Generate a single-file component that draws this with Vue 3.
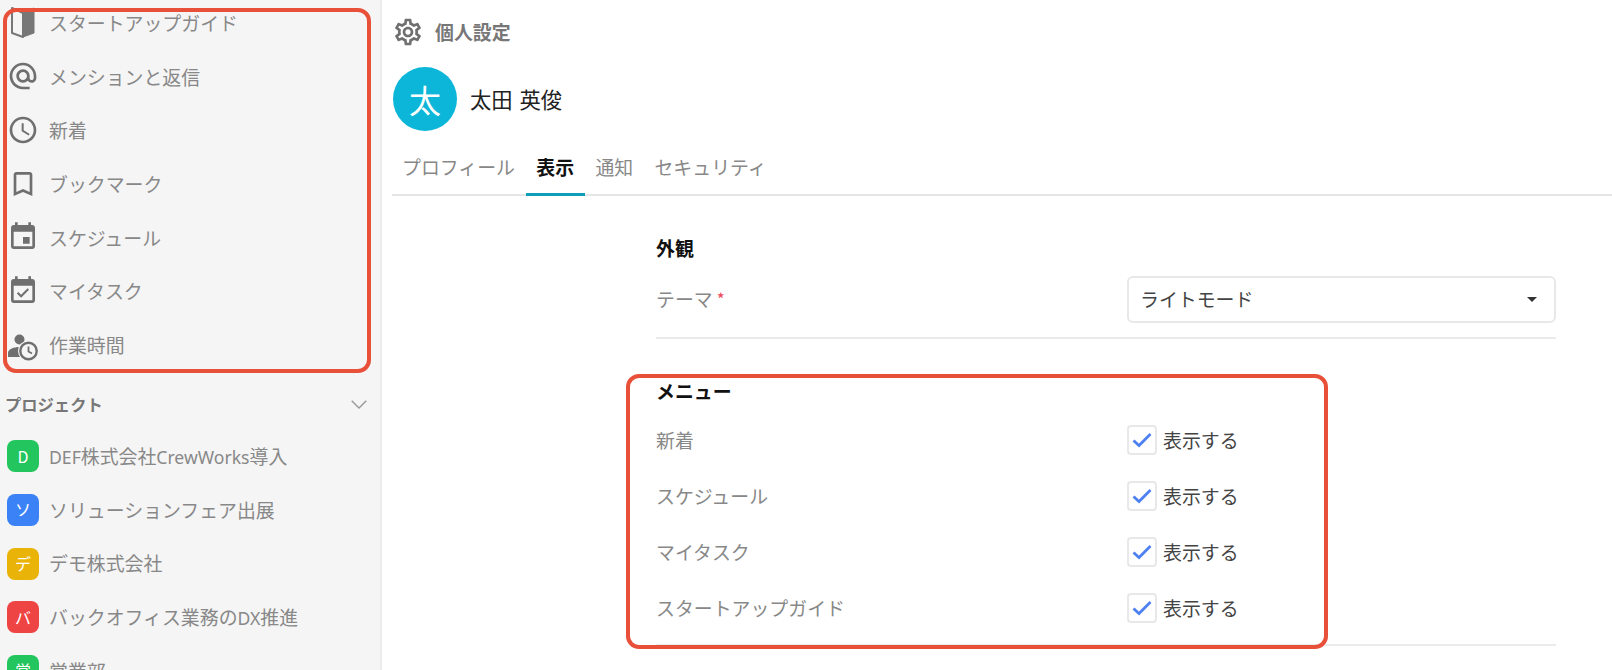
<script setup>
const navItems = [
  { label: 'スタートアップガイド', icon: 'book' },
  { label: 'メンションと返信', icon: 'M12 2C6.48 2 2 6.48 2 12s4.48 10 10 10h5v-2h-5c-4.34 0-8-3.66-8-8s3.66-8 8-8 8 3.66 8 8v1.43c0 .79-.71 1.57-1.5 1.57s-1.5-.78-1.5-1.57V12c0-2.76-2.24-5-5-5s-5 2.24-5 5 2.24 5 5 5c1.38 0 2.64-.56 3.54-1.47.65.89 1.77 1.47 2.96 1.47 1.97 0 3.5-1.6 3.5-3.57V12c0-5.52-4.48-10-10-10zm0 13c-1.66 0-3-1.34-3-3s1.34-3 3-3 3 1.34 3 3-1.34 3-3 3z' },
  { label: '新着', icon: 'M11.99 2C6.47 2 2 6.48 2 12s4.47 10 9.99 10C17.52 22 22 17.52 22 12S17.52 2 11.99 2zM12 20c-4.42 0-8-3.58-8-8s3.58-8 8-8 8 3.58 8 8-3.58 8-8 8zm.5-13H11v6l5.25 3.15.75-1.23-4.5-2.67z' },
  { label: 'ブックマーク', icon: 'M17 3H7c-1.1 0-1.99.9-1.99 2L5 21l7-3 7 3V5c0-1.1-.9-2-2-2zm0 15l-5-2.18L7 18V5h10v13z' },
  { label: 'スケジュール', icon: 'M17 12h-5v5h5v-5zM16 1v2H8V1H6v2H5c-1.11 0-1.99.9-1.99 2L3 19c0 1.1.89 2 2 2h14c1.1 0 2-.9 2-2V5c0-1.1-.9-2-2-2h-1V1h-2zm3 18H5V8h14v11z' },
  { label: 'マイタスク', icon: 'M16.53 11.06L15.47 10l-4.88 4.88-2.12-2.12-1.06 1.06L10.59 17l5.94-5.94zM19 3h-1V1h-2v2H8V1H6v2H5c-1.11 0-1.99.9-1.99 2L3 19c0 1.1.89 2 2 2h14c1.1 0 2-.9 2-2V5c0-1.1-.9-2-2-2zm0 16H5V8h14v11z' },
  { label: '作業時間', icon: 'person' },
]
const projects = [
  { badge: 'D', parts: [['DEF', true], ['株式会社', false], ['CrewWorks', true], ['導入', false]], color: '#22c55e' },
  { badge: 'ソ', parts: [['ソリューションフェア出展', false]], color: '#3b82f6' },
  { badge: 'デ', parts: [['デモ株式会社', false]], color: '#eab308' },
  { badge: 'バ', parts: [['バックオフィス業務の', false], ['DX', true], ['推進', false]], color: '#ef4444' },
  { badge: '営', parts: [['営業部', false]], color: '#22c55e' },
]
const tabs = ['プロフィール', '表示', '通知', 'セキュリティ']
const menuRows = ['新着', 'スケジュール', 'マイタスク', 'スタートアップガイド']
const gear = 'M19.43 12.98c.04-.32.07-.64.07-.98 0-.34-.03-.66-.07-.98l2.11-1.65c.19-.15.24-.42.12-.64l-2-3.46c-.09-.16-.26-.25-.44-.25-.06 0-.12.01-.17.03l-2.49 1c-.52-.4-1.08-.73-1.69-.98l-.38-2.65C14.46 2.18 14.25 2 14 2h-4c-.25 0-.46.18-.49.42l-.38 2.65c-.61.25-1.17.59-1.69.98l-2.49-1c-.06-.02-.12-.03-.18-.03-.17 0-.34.09-.43.25l-2 3.46c-.13.22-.07.49.12.64l2.11 1.65c-.04.32-.07.65-.07.98 0 .33.03.66.07.98l-2.11 1.65c-.19.15-.24.42-.12.64l2 3.46c.09.16.26.25.44.25.06 0 .12-.01.17-.03l2.49-1c.52.4 1.08.73 1.69.98l.38 2.65c.03.24.24.42.49.42h4c.25 0 .46-.18.49-.42l.38-2.65c.61-.25 1.17-.59 1.69-.98l2.49 1c.06.02.12.03.18.03.17 0 .34-.09.43-.25l2-3.46c.12-.22.07-.49-.12-.64l-2.11-1.65zm-1.98-1.71c.04.31.05.52.05.73 0 .21-.02.43-.05.73l-.14 1.13.89.7 1.08.84-.7 1.21-1.27-.51-1.04-.42-.9.68c-.43.32-.84.56-1.25.73l-1.06.43-.16 1.13-.2 1.35h-1.4l-.19-1.35-.16-1.13-1.06-.43c-.43-.18-.83-.41-1.23-.71l-.91-.7-1.06.43-1.27.51-.7-1.21 1.08-.84.89-.7-.14-1.13c-.03-.31-.05-.54-.05-.74s.02-.43.05-.73l.14-1.13-.89-.7-1.08-.84.7-1.21 1.27.51 1.04.42.9-.68c.43-.32.84-.56 1.25-.73l1.06-.43.16-1.13.2-1.35h1.39l.19 1.35.16 1.13 1.06.43c.43.18.83.41 1.23.71l.91.7 1.06-.43 1.27-.51.7 1.21-1.07.85-.89.7.14 1.13zM12 8c-2.21 0-4 1.79-4 4s1.79 4 4 4 4-1.79 4-4-1.79-4-4-4zm0 6c-1.1 0-2-.9-2-2s.9-2 2-2 2 .9 2 2-.9 2-2 2z'
</script>

<template>
  <div class="page">
    <aside class="sidebar">
      <nav class="nav">
        <div v-for="item in navItems" :key="item.label" class="nav-row">
          <svg v-if="item.icon === 'book'" class="nav-icon" viewBox="0 0 32 32">
            <path d="M5 1 16 6V30L5 26Z" fill="none" stroke="#777" stroke-width="2" stroke-linejoin="round" />
            <path d="M16 6 27 1V26L16 30Z" fill="#777" stroke="#777" stroke-width="1" stroke-linejoin="round" />
          </svg>
          <svg v-else-if="item.icon === 'person'" class="nav-icon person" viewBox="0 0 32 32">
            <circle cx="12.5" cy="10.5" r="5" fill="#6f6f6f" />
            <path d="M1 28V24c0-4 6-6 11.5-6 2 0 4 .3 5.5 .8V28Z" fill="#6f6f6f" />
            <circle cx="21.500" cy="22" r="10.500" fill="#f5f5f5" />
            <circle cx="21.500" cy="22" r="8.200" fill="none" stroke="#6f6f6f" stroke-width="2.400" />
            <path d="M21.500 17.500V22.500L25 24.500" fill="none" stroke="#6f6f6f" stroke-width="1.800" />
          </svg>
          <svg v-else class="nav-icon" viewBox="0 0 24 24">
            <path :d="item.icon" fill="#6f6f6f" />
          </svg>
          <span class="nav-text">{{ item.label }}</span>
        </div>
      </nav>
      <div class="project-head">
        <span>プロジェクト</span>
        <svg class="chevron" viewBox="0 0 16 9">
          <path d="M.7 .7 8 8 15.3 .7" fill="none" stroke="#999" stroke-width="1.4" />
        </svg>
      </div>
      <div v-for="p in projects" :key="p.badge + p.parts[0][0]" class="nav-row">
        <span class="badge" :style="{ background: p.color }">{{ p.badge }}</span>
        <span><span v-for="(part, i) in p.parts" :key="i" :class="{ latin: part[1] }">{{ part[0] }}</span></span>
      </div>
    </aside>

    <main class="main">
      <div class="title-row">
        <svg class="gear" viewBox="0 0 24 24"><path :d="gear" fill="#707070" /></svg>
        <span>個人設定</span>
      </div>
      <div class="profile">
        <div class="avatar">太</div>
        <div class="name">太田 英俊</div>
      </div>
      <div class="tabs">
        <div v-for="t in tabs" :key="t" class="tab" :class="{ active: t === '表示' }">{{ t }}</div>
      </div>

      <section class="content">
        <div class="section-block first">
          <h2 class="section-title">外観</h2>
          <div class="grid-row theme-row">
            <div class="label">テーマ<span class="req">*</span></div>
            <div class="select">
              <span>ライトモード</span>
              <svg class="caret" viewBox="0 0 10 5"><path d="M0 0H10L5 5Z" fill="#333" /></svg>
            </div>
          </div>
        </div>
        <div class="section-block second">
          <h2 class="section-title">メニュー</h2>
          <div class="menu-rows">
            <div v-for="r in menuRows" :key="r" class="grid-row menu-row">
              <div class="label">{{ r }}</div>
              <div class="check-wrap">
                <span class="check">
                  <svg viewBox="0 0 26 26"><path d="M4.500 13.500 10 18.500 21.500 7" fill="none" stroke="#4d80f0" stroke-width="2.800" /></svg>
                </span>
                <span class="check-text">表示する</span>
              </div>
            </div>
          </div>
        </div>
      </section>
    </main>

    <div class="callout callout-nav"></div>
    <div class="callout callout-menu"></div>
  </div>
</template>

<style>
html, body { margin: 0; background: #fff; }
</style>

<style scoped>
.page {
  position: relative;
  display: flex;
  height: 670px;
  overflow: hidden;
  font-family: "Noto Sans CJK JP", sans-serif;
  font-size: 18.9px;
  line-height: 1.2;
  color: #888;
}
.sidebar {
  flex: 0 0 380px;
  height: 670px;
  overflow: hidden;
  background: #f5f5f5;
  border-right: 2px solid #ebebeb;
}
.nav { margin-top: -4px; }
.nav-row {
  display: flex;
  align-items: center;
  gap: 10px;
  height: 53.67px;
  padding-left: 7px;
  white-space: nowrap;
}
.nav-text { padding-top: 1px; }
.latin {
  font-family: "Noto Sans", sans-serif;
  font-size: 17.6px;
  line-height: 1;
}
.nav-icon { width: 32px; height: 32px; flex: none; }
.nav-icon.person { overflow: visible; }
.project-head {
  display: flex;
  align-items: center;
  justify-content: space-between;
  box-sizing: border-box;
  height: 58px;
  padding: 8px 13px 0 5px;
  font-size: 16.3px;
  font-weight: 700;
  color: #777;
}
.chevron { width: 16px; height: 9px; }
.badge {
  display: flex;
  align-items: center;
  justify-content: center;
  flex: none;
  width: 32px;
  height: 32px;
  border-radius: 8px;
  color: #fff;
  font-size: 16px;
}
.main { flex: 1; min-width: 0; }
.title-row {
  display: flex;
  align-items: center;
  gap: 14px;
  height: 64px;
  padding-left: 12px;
  font-weight: 700;
  color: #777;
}
.gear { width: 32px; height: 32px; margin-right: -3px; margin-left: -2px; }
.profile {
  display: flex;
  align-items: center;
  gap: 13px;
  height: 70px;
  padding: 0 0 0 11px;
}
.avatar {
  display: flex;
  align-items: center;
  justify-content: center;
  width: 64px;
  height: 64px;
  border-radius: 50%;
  background: #0cb6d8;
  color: #fff;
  font-size: 32px;
}
.name { font-size: 21.33px; color: #222; word-spacing: 2px; }
.tabs {
  display: flex;
  box-sizing: border-box;
  height: 62px;
  margin-left: 10px;
  border-bottom: 2px solid #e5e5e5;
  padding-top: 8px;
}
.tab {
  display: flex;
  align-items: center;
  padding: 0 10.67px;
  margin-bottom: -2px;
  border-bottom: 3px solid transparent;
}
.tab:first-child { padding-left: 10px; }
.tab.active {
  color: #111;
  font-weight: 700;
  border-bottom-color: #0e9fb8;
}
.content { padding: 0 56px 0 274px; }
.section-block { border-bottom: 2px solid #ebebeb; }
.section-block.first { padding-bottom: 14px; margin-top: 39px; }
.section-block.second { padding-bottom: 8px; margin-top: 39px; }
.section-title {
  margin: 0;
  height: 28px;
  line-height: 28px;
  font-family: "Noto Sans", "Noto Sans CJK JP", sans-serif;
  font-size: 18.9px;
  font-weight: 700;
  color: #111;
}
.grid-row {
  display: grid;
  grid-template-columns: 471px 429px;
  align-items: center;
}
.theme-row { margin-top: 13px; }
.req {
  margin-left: 4px;
  color: #f0485a;
  font-size: 17px;
  line-height: 1;
  vertical-align: 1px;
}
.select {
  display: flex;
  align-items: center;
  justify-content: space-between;
  box-sizing: border-box;
  height: 47px;
  padding: 0 17px 0 11px;
  border: 2px solid #e8e8e8;
  border-radius: 6px;
  color: #444;
}
.caret { width: 10px; height: 5px; }
.menu-rows { margin-top: 6px; }
.menu-row { height: 56px; }
.check-wrap { display: flex; align-items: center; gap: 6px; }
.check {
  display: block;
  box-sizing: border-box;
  width: 30px;
  height: 30px;
  border: 2px solid #e8e8e8;
  border-radius: 4px;
  background: #fff;
}
.check svg { display: block; width: 26px; height: 26px; }
.check-text { color: #444; }
.callout {
  position: absolute;
  box-sizing: border-box;
  border: 4px solid #e8503a;
  border-radius: 13px;
  pointer-events: none;
}
.callout-nav { left: 3px; top: 8px; width: 368px; height: 365px; }
.callout-menu { left: 626px; top: 374px; width: 702px; height: 275px; }
</style>
